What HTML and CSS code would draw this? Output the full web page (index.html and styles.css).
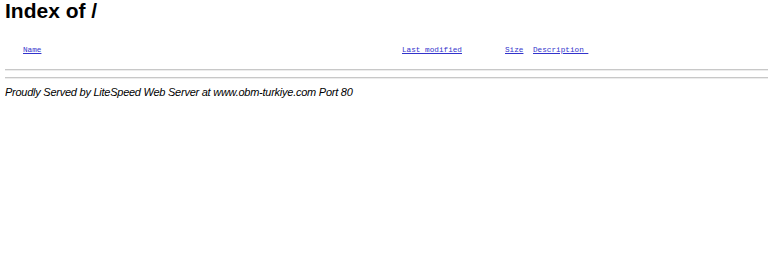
FILE: index.html
```html
<!DOCTYPE html>
<html lang="en">
<head>
    <meta charset="UTF-8">
    <title>Index of /</title>
    <link rel="stylesheet" href="styles.css">
</head>
<body>
    <h1>Index of /</h1>
    <table class="listing">
        <tr class="head">
            <th class="icon">&nbsp;</th>
            <th class="name"><a href="?C=N&amp;O=A">Name</a></th>
            <th class="modified"><a href="?C=M&amp;O=A">Last modified</a></th>
            <th class="size"><a href="?C=S&amp;O=A">Size</a></th>
            <th class="desc"><a href="?C=D&amp;O=A">Description&nbsp;</a></th>
        </tr>
        <tr class="rule first"><th colspan="5"><hr></th></tr>
        <tr class="rule"><th colspan="5"><hr></th></tr>
    </table>
    <address>Proudly Served by LiteSpeed Web Server at www.obm-turkiye.com Port 80</address>
</body>
</html>
```

FILE: styles.css
```css
body {
    margin: 0 0 0 5px;
    background: #fff;
    color: #000;
    font-family: "Liberation Sans", Arial, sans-serif;
}
h1 {
    font-size: 21px;
    font-weight: bold;
    margin: 0;
    line-height: 22px;
}
.listing {
    width: 100%;
    border-collapse: collapse;
    margin-top: 19px;
    font-family: "Liberation Mono", "DejaVu Sans Mono", monospace;
    font-size: 7.7px;
}
.listing th {
    font-weight: normal;
    text-align: left;
    padding: 0;
}
.listing .head th {
    height: 18px;
    vertical-align: middle;
}
.listing a {
    color: #3333cc;
}
.listing .icon { width: 18px; }
.listing .name { width: 379px; }
.listing .modified { width: 103px; }
.listing .size { width: 28px; }
.listing .rule.first th {
    padding-top: 7px;
}
hr {
    border: 0;
    border-top: 1px solid #c8c8c8;
    border-bottom: 1px solid #ececec;
    margin: 3px 0 3px;
}
address {
    font-size: 11px;
    letter-spacing: -0.25px;
    margin-top: 4px;
}
```
